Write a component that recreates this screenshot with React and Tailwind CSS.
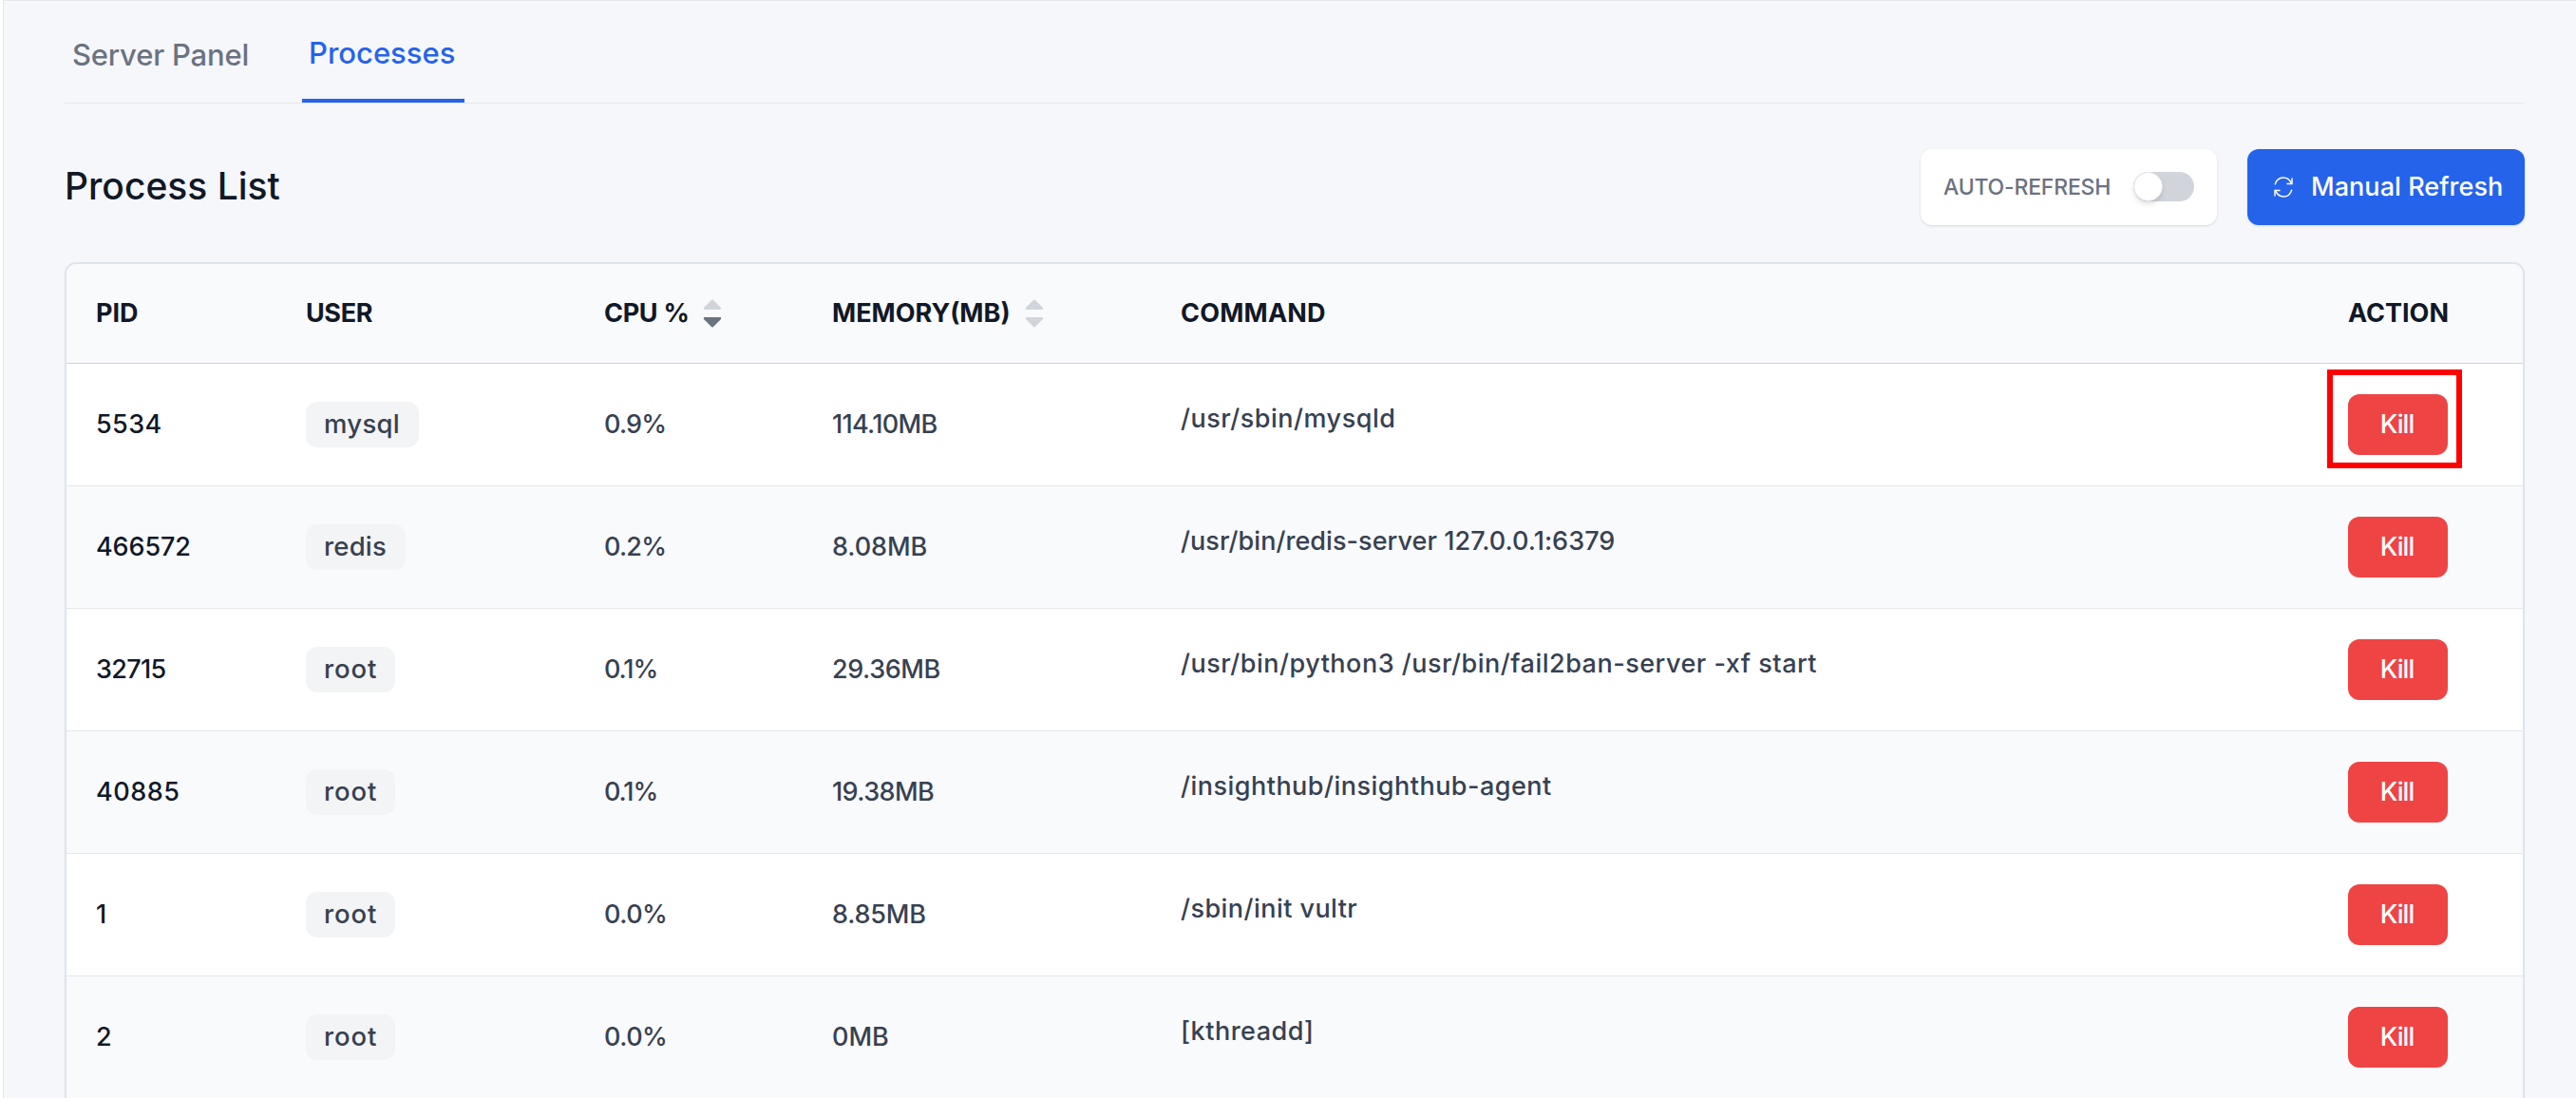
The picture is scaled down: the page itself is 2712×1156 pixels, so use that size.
import React, { useState } from 'react'

const tabs = ['Server Panel', 'Processes']

const processes = [
  { pid: '5534', pidCls: 'tracking-[0.4px]', user: 'mysql', userCls: 'w-[119px] tracking-[0.3px]', cpu: '0.9%', cpuCls: 'tracking-[-0.8px]', memory: '114.10MB', memCls: 'tracking-[-0.7px]', command: '/usr/sbin/mysqld', cmdCls: 'tracking-[0.5px]' },
  { pid: '466572', pidCls: 'tracking-[-0.1px]', user: 'redis', userCls: 'w-[105px] tracking-[0.2px]', cpu: '0.2%', cpuCls: 'tracking-[-0.8px]', memory: '8.08MB', memCls: 'tracking-[-0.1px]', command: '/usr/bin/redis-server 127.0.0.1:6379', cmdCls: 'tracking-[0.05px]' },
  { pid: '32715', pidCls: 'tracking-[-0.7px]', user: 'root', userCls: 'w-[94px] tracking-[0.9px]', cpu: '0.1%', cpuCls: 'tracking-[-1.1px]', memory: '29.36MB', memCls: 'tracking-[-0.4px]', command: '/usr/bin/python3 /usr/bin/fail2ban-server -xf start', cmdCls: 'tracking-[0.5px]' },
  { pid: '40885', pidCls: 'tracking-[0.5px]', user: 'root', userCls: 'w-[94px] tracking-[0.9px]', cpu: '0.1%', cpuCls: 'tracking-[-1.1px]', memory: '19.38MB', memCls: 'tracking-[-0.6px]', command: '/insighthub/insighthub-agent', cmdCls: 'tracking-[0.48px]' },
  { pid: '1', pidCls: 'tracking-normal', user: 'root', userCls: 'w-[94px] tracking-[0.9px]', cpu: '0.0%', cpuCls: 'tracking-[-0.5px]', memory: '8.85MB', memCls: 'tracking-[-0.2px]', command: '/sbin/init vultr', cmdCls: 'tracking-[0.45px]' },
  { pid: '2', pidCls: 'tracking-normal', user: 'root', userCls: 'w-[94px] tracking-[0.9px]', cpu: '0.0%', cpuCls: 'tracking-[-0.5px]', memory: '0MB', memCls: 'tracking-normal', command: '[kthreadd]', cmdCls: 'tracking-[0.5px]' },
]

const columns = 'grid grid-cols-[221px_314px_240px_367px_1229px_1fr] pl-[31px]'

const RefreshIcon = () => (
  <svg width="20" height="22" viewBox="0 0 20 22" fill="none" stroke="currentColor" strokeWidth="1.5" className="shrink-0">
    <path d="M1.2 8.4C2.4 3.8 6 1 10 1c3.600 0 6.400 2 8.300 5.800" />
    <path d="M19 1.600v5.800h-5.600" />
    <path d="M18.800 13.600C17.600 18.200 14 21 10 21c-3.600 0-6.400-2-8.300-5.800" />
    <path d="M1 20.400v-5.800h5.600" />
  </svg>
)

//Up and down arrows, the active one is darker
const SortIcon = ({ active }) => (
  <svg width="20" height="30" viewBox="0 0 20 30" className="shrink-0 mb-[2px]">
    <path
      d="M9 .9a1.400 1.400 0 0 1 2 0l7.800 7.900c.8.900.4 2.200-.9 2.200H2.100C.8 11 .4 9.700 1.200 8.800z"
      fill={active === 'asc' ? '#6b7280' : '#d1d5db'}
    />
    <path
      d="M9 29.100a1.400 1.400 0 0 0 2 0l7.800-7.900c.8-.9.400-2.200-.9-2.200H2.100c-1.300 0-1.700 1.300-.9 2.200z"
      fill={active === 'desc' ? '#6b7280' : '#d1d5db'}
    />
  </svg>
)

const App = () => {
  const [activeTab, setActiveTab] = useState('Processes')
  const [autoRefresh, setAutoRefresh] = useState(false)

  return (
    <div className="w-[2712px] h-[1156px] overflow-hidden bg-white pl-[3px] font-['Inter',sans-serif] text-[27px] font-medium">
      <div className="h-full border-l border-t border-[#e5e7eb] bg-[#f5f7fb] pl-16 pr-[54px]">
        <nav className="flex gap-12 h-[108px] border-b border-[#e5e7eb] text-[31px]">
          {tabs.map((tab) => (
            <button
              key={tab}
              onClick={() => setActiveTab(tab)}
              className={
                activeTab === tab
                  ? 'h-[107px] pl-[7px] text-left pt-[7px] border-b-4 border-[#2563eb] text-[#2563eb] w-[171px]'
                  : 'h-[107px] pl-[8px] text-left pt-[7px] text-[#6b7280] tracking-[-0.2px] w-[202px] whitespace-nowrap'
              }
            >
              {tab}
            </button>
          ))}
        </nav>

        <div className="flex items-center justify-between mt-12">
          <h1 className="text-[39px] text-[#111827] pb-px">Process List</h1>
          <div className="flex gap-8">
            <div className="flex items-center justify-between w-[312px] h-20 px-6 rounded-xl bg-white shadow">
              <span className="text-[23px] text-[#6b7280] tracking-[-0.2px]">AUTO-REFRESH</span>
              <button
                onClick={() => setAutoRefresh(!autoRefresh)}
                className={autoRefresh ? 'flex justify-end w-16 h-[31px] mb-[2px] rounded-full bg-[#2563eb]' : 'flex w-16 h-[31px] mb-[2px] rounded-full bg-[#d1d5db]'}
              >
                <span className="w-[31px] h-[31px] rounded-full bg-white border border-[#e5e7eb] shadow-md" />
              </button>
            </div>
            <button className="flex items-center w-[292px] h-20 pl-7 gap-[19px] rounded-xl bg-[#2563eb] text-white shadow-sm">
              <RefreshIcon />
              <span className="tracking-[0.05px] whitespace-nowrap">Manual Refresh</span>
            </button>
          </div>
        </div>

        <div className="mt-[39px] h-[900px] overflow-hidden rounded-xl border-2 border-[#dde4ec] bg-white">
          <div className={`${columns} h-[105px] items-center border-b border-[#d1d5db] bg-[#f9fafc] text-[#111827] font-bold pt-px`}>
            <div>PID</div>
            <div className="tracking-[-0.4px]">USER</div>
            <div className="flex items-center gap-[14px]"><span className="tracking-[-0.3px]">CPU %</span> <SortIcon active="desc" /></div>
            <div className="flex items-center gap-[15px]">MEMORY(MB) <SortIcon /></div>
            <div className="tracking-[0.2px]">COMMAND</div>
            <div>ACTION</div>
          </div>
          {processes.map((p, i) => (
            <div key={p.pid} className={`${columns} h-[129px] items-center border-b border-[#e5e7eb] text-[#374151] ${i % 2 ? 'bg-[#f9fafc]' : 'bg-white'}`}>
              <div className={`text-[#111827] ${p.pidCls}`}>{p.pid}</div>
              <div>
                <div className={`h-12 leading-[47px] text-[27.5px] pl-[19px] rounded-xl bg-[#f3f4f6] ${p.userCls}`}>{p.user}</div>
              </div>
              <div className={p.cpuCls}>{p.cpu}</div>
              <div className={p.memCls}>{p.memory}</div>
              <div className={`pb-[11px] ${p.cmdCls}`}>{p.command}</div>
              <div className="relative w-[105px]">
                <button className="block w-[105px] h-16 pr-[2px] rounded-xl bg-[#ef4444] text-white tracking-[-0.9px]">Kill</button>
                {i === 0 && <div className="absolute -left-[22px] -top-[26px] w-[142px] h-[104px] border-[6px] border-[#ff0000]" />}
              </div>
            </div>
          ))}
        </div>
      </div>
    </div>
  )
}

export default App
